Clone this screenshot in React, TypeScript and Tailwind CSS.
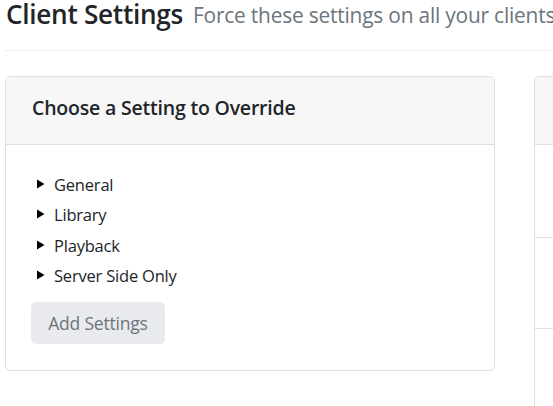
import React from "react";

const Tri = () => (
  <svg width="8" height="10" viewBox="0 0 8 10" className="mr-[9px] shrink-0 mt-[-3px]">
    <polygon points="0,0.5 7.5,5 0,9.5" fill="#000" />
  </svg>
);

export default function App() {
  const items = ["General", "Library", "Playback", "Server Side Only"];
  return (
    <div className="w-[553px] h-[406px] overflow-hidden bg-white text-[#212529]" style={{ fontFamily: '"Open Sans", "Noto Sans", sans-serif' }}>
      <div className="pl-[6px] h-[50px] flex items-start whitespace-nowrap">
        <h1 className="text-[26.2px] leading-[30px] font-semibold tracking-[-0.3px] mt-[-1px]">Client Settings</h1>
        <span className="ml-[10px] text-[20.9px] leading-[30px] text-[#6c757d] mt-[0px] tracking-[-0.2px]">Force these settings on all your clients</span>
      </div>
      <div className="ml-[5px] border-t border-[#eeeeee]" />
      <div className="flex items-start gap-[39px] pl-[5px] pt-[25px]">
        <div className="w-[490px] shrink-0 border border-[#dfdfdf] rounded-[5px] overflow-hidden">
          <div className="h-[68px] bg-[#f7f7f7] border-b border-[#dfdfdf] flex items-center pl-[26px] pb-[6px]">
            <h2 className="text-[19.5px] font-semibold tracking-[-0.2px]">Choose a Setting to Override</h2>
          </div>
          <div className="pl-[25px] pt-[25px] pb-[26px]">
            <ul className="flex flex-col">
              {items.map((t) => (
                <li key={t} className="h-[30.5px] flex items-center pl-[6px] text-[16.5px] tracking-[-0.2px]">
                  <Tri />
                  <span>{t}</span>
                </li>
              ))}
            </ul>
            <button className="mt-[10px] w-[134px] h-[42px] rounded-[5px] bg-[#e9eaed] text-[#6c757d] text-[17.5px] tracking-[-0.2px]">Add Settings</button>
          </div>
        </div>
        <div className="w-[300px] shrink-0 border border-[#dfdfdf] rounded-[5px] h-[400px] overflow-hidden">
          <div className="h-[68px] bg-[#f7f7f7] border-b border-[#dfdfdf]" />
          <div className="h-[93px] border-b border-[#dfdfdf]" />
          <div className="h-[91px] border-b border-[#dfdfdf]" />
        </div>
      </div>
    </div>
  );
}
